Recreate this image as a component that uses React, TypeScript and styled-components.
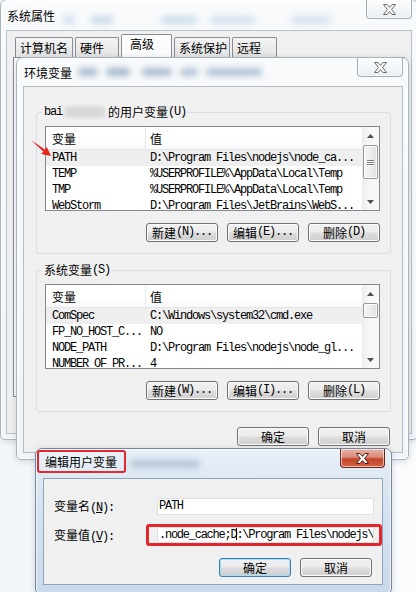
import styled, { createGlobalStyle } from "styled-components";

const CJK = `"Noto Sans CJK SC", "Liberation Sans", sans-serif`;
const MONO = `"Liberation Mono", "Noto Sans CJK SC", monospace`;

const GlobalStyle = createGlobalStyle`
  html, body { margin: 0; padding: 0; }
  body {
    background: #f6f8fa;
    font-family: ${CJK};
    font-size: 12px;
    color: #000;
  }
`;

//desktop + windows
const Desktop = styled.div`
  position: relative;
  width: 416px;
  height: 592px;
  overflow: hidden;
  background: linear-gradient(90deg, #f3f6f8 0%, #fafbfc 100%);
`;

const Window = styled.div<{ $x: number; $y: number; $w: number; $h: number; $pad: string; $active?: boolean }>`
  position: absolute;
  left: ${p => p.$x}px;
  top: ${p => p.$y}px;
  width: ${p => p.$w}px;
  height: ${p => p.$h}px;
  box-sizing: border-box;
  display: flex;
  flex-direction: column;
  padding: ${p => p.$pad};
  border: 1px solid ${p => (p.$active ? "#71869e" : "#a9b3bd")};
  border-radius: 7px 7px 5px 5px;
  background: ${p =>
    p.$active
      ? "linear-gradient(180deg, #e9f0f8 0%, #d6e3f0 35%, #cbdaea 100%)"
      : "linear-gradient(180deg, #f8fafc 0%, #f1f5f8 100%)"};
  box-shadow: inset 0 0 0 1px rgba(255, 255, 255, 0.75), 0 1px 6px rgba(40, 60, 90, 0.18);
`;

const TitleBar = styled.div<{ $h: number }>`
  flex: none;
  height: ${p => p.$h}px;
  display: flex;
  align-items: center;
`;

const Title = styled.span<{ $marked?: boolean }>`
  flex: none;
  font-size: 12px;
  line-height: 15px;
  white-space: nowrap;
  margin-left: 1px;
  text-shadow: 0 0 6px rgba(255, 255, 255, 0.9);
  ${p =>
    p.$marked &&
    `
    align-self: flex-start;
    margin: 1px 0 0 -6px;
    height: 23px;
    box-sizing: border-box;
    padding: 2px 7px 0 6px;
    border: 2px solid #e3262b;
    border-radius: 3px;
  `}
`;

const Haze = styled.span<{ $w: number; $ml: number; $c: string; $dy?: number }>`
  flex: none;
  width: ${p => p.$w}px;
  height: 8px;
  margin-left: ${p => p.$ml}px;
  margin-top: ${p => p.$dy ?? 0}px;
  border-radius: 4px;
  background: ${p => p.$c};
  filter: blur(3px);
`;

const CloseBtn = styled.div<{ $w: number; $h: number; $red?: boolean; $mr?: number }>`
  flex: none;
  align-self: flex-start;
  margin-left: auto;
  margin-right: ${p => p.$mr ?? 0}px;
  width: ${p => p.$w}px;
  height: ${p => p.$h}px;
  box-sizing: border-box;
  display: flex;
  align-items: center;
  justify-content: center;
  border: 1px solid ${p => (p.$red ? "#6e2419" : "#a3acb6")};
  border-top: none;
  border-radius: 0 0 4px 4px;
  background: ${p =>
    p.$red
      ? "linear-gradient(180deg, #e9b2a6 0%, #d98c7b 45%, #c4452c 55%, #cf6243 100%)"
      : "linear-gradient(180deg, #fdfdfe 0%, #f3f6f8 50%, #e9eef2 100%)"};
  box-shadow: inset 0 0 0 1px rgba(255, 255, 255, 0.6);
`;

const Client = styled.div<{ $edge: string }>`
  flex: 1;
  min-height: 0;
  display: flex;
  flex-direction: column;
  background: #f0f0f0;
  border: 1px solid ${p => p.$edge};
  overflow: hidden;
`;

//tabs (系统属性)
const TabStrip = styled.div`
  display: flex;
  align-items: flex-end;
  gap: 2px;
  margin: 3px 0 0 8px;
  height: 23px;
`;

const Tab = styled.div<{ $w: number; $on?: boolean }>`
  width: ${p => p.$w}px;
  height: ${p => (p.$on ? 23 : 20)}px;
  box-sizing: border-box;
  border: 1px solid #898c95;
  border-bottom: none;
  border-radius: 2px 2px 0 0;
  background: ${p => (p.$on ? "#fcfcfc" : "linear-gradient(180deg, #f4f4f4, #e3e3e3)")};
  padding: ${p => (p.$on ? "1px 0 0 8px" : "2px 0 0 4px")};
  font-size: 12px;
  line-height: 16px;
`;

const TabPanel = styled.div`
  flex: 1;
  margin: 0 6px 36px 6px;
  border: 1px solid #898c95;
  background: #fcfcfc;
`;

//env window parts
const EnvBody = styled.div`
  display: flex;
  flex-direction: column;
  padding: 0 11px 0 12px;
`;

const Group = styled.fieldset<{ $mt: number }>`
  margin: ${p => p.$mt}px 0 0 0;
  padding: 7px 10px 11px 8px;
  border: 1px solid #d5dfe5;
  border-radius: 3px;
  min-width: 0;
`;

const Legend = styled.legend`
  margin-left: -3px;
  padding: 0 2px;
  font-size: 12px;
  line-height: 14px;
  display: flex;
  align-items: center;
`;

const Hw = styled.span`
  font-family: ${MONO};
  font-size: 12px;
  letter-spacing: -1.2px;
`;

const Smudge = styled.span`
  display: inline-block;
  width: 40px;
  height: 12px;
  margin: 0 3px 0 3px;
  border-radius: 3px;
  background: #d9d9d9;
  filter: blur(1.5px);
`;

const ListBox = styled.div`
  height: 85px;
  box-sizing: border-box;
  border: 1px solid #828790;
  background: #fff;
  display: flex;
`;

const ListBody = styled.div`
  flex: 1;
  min-width: 0;
  overflow: hidden;
`;

const HeaderRow = styled.div`
  display: grid;
  grid-template-columns: 99px 1fr;
  height: 23px;
  box-sizing: border-box;
  border-bottom: 1px solid #e5e5e5;
  background: linear-gradient(180deg, #ffffff 0%, #ffffff 60%, #f8f9fa 100%);
`;

const HeaderCell = styled.div<{ $divider?: boolean }>`
  display: flex;
  align-items: center;
  padding-left: ${p => (p.$divider ? 4 : 6)}px;
  border-left: ${p => (p.$divider ? "1px solid #e5e5e5" : "none")};
  font-size: 12px;
`;

const Row = styled.div<{ $selected?: boolean }>`
  display: grid;
  grid-template-columns: 99px 1fr;
  height: 16px;
  background: ${p => (p.$selected ? "#efefef" : "transparent")};
`;

const Cell = styled.div<{ $first?: boolean }>`
  padding-left: ${p => (p.$first ? 6 : 5)}px;
  font-family: ${MONO};
  font-size: 12px;
  letter-spacing: -1.2px;
  line-height: 16px;
  white-space: nowrap;
  overflow: hidden;
`;

const ScrollBar = styled.div`
  flex: none;
  width: 17px;
  display: flex;
  flex-direction: column;
  background: linear-gradient(90deg, #ececec 0%, #f6f6f6 40%, #f9f9f9 100%);
`;

const ArrowBox = styled.div`
  flex: none;
  height: 17px;
  display: flex;
  align-items: center;
  justify-content: center;
`;

const Track = styled.div`
  flex: 1;
  padding: 1px 1px 0 1px;
`;

const Thumb = styled.div<{ $h: number }>`
  height: ${p => p.$h}px;
  box-sizing: border-box;
  border: 1px solid #979797;
  border-radius: 2px;
  background: linear-gradient(90deg, #f6f6f6 0%, #ececec 50%, #dfdfdf 100%);
  box-shadow: inset 0 0 0 1px #fbfbfb;
  display: flex;
  flex-direction: column;
  align-items: center;
  justify-content: center;
  gap: 1px;
`;

const GripLine = styled.span`
  width: 7px;
  height: 1px;
  background: #7a7a7a;
  box-shadow: 0 1px 0 #ffffff;
`;

const ButtonRow = styled.div<{ $mt: number; $pr?: number }>`
  display: flex;
  justify-content: flex-end;
  gap: 9px;
  margin-top: ${p => p.$mt}px;
  padding-right: ${p => p.$pr ?? 0}px;
`;

const Button = styled.div<{ $default?: boolean }>`
  width: 72px;
  height: 19px;
  box-sizing: border-box;
  display: flex;
  align-items: center;
  justify-content: center;
  border: 1px solid ${p => (p.$default ? "#3c7fb1" : "#707070")};
  border-radius: 3px;
  background: linear-gradient(180deg, #f2f2f2 0%, #ebebeb 48%, #dddddd 52%, #cfcfcf 100%);
  box-shadow: inset 0 0 0 1px ${p => (p.$default ? "#a6dcf8" : "#fbfbfb")};
  font-size: 12px;
  line-height: 15px;
  white-space: nowrap;
`;

//edit dialog parts
const EditBody = styled.div`
  display: flex;
  flex-direction: column;
  padding: 18px 0 0 10px;
`;

const FieldRow = styled.div<{ $mt?: number }>`
  display: flex;
  align-items: center;
  margin-top: ${p => p.$mt ?? 0}px;
`;

const FieldLabel = styled.div`
  width: 103px;
  flex: none;
  font-size: 12px;
  white-space: nowrap;
  u { text-decoration-thickness: 1px; text-underline-offset: 1px; }
`;

const TextBox = styled.div<{ $h: number }>`
  width: 217px;
  height: ${p => p.$h}px;
  box-sizing: border-box;
  border: 1px solid #dde0e5;
  background: #fff;
  padding-left: 1px;
  font-family: ${MONO};
  font-size: 12px;
  letter-spacing: -1.25px;
  line-height: ${p => p.$h - 2}px;
  white-space: nowrap;
  overflow: hidden;
`;

const Highlight = styled.div`
  margin-left: -11px;
  height: 22px;
  box-sizing: border-box;
  padding: 0 5px 0 8px;
  border: 3px solid #e3262b;
  border-radius: 3px;
  display: flex;
  align-items: center;
`;

const Caret = styled.span`
  display: inline-block;
  width: 1px;
  height: 12px;
  margin-right: -1px;
  vertical-align: -2px;
  background: #000;
`;

const Pointer = styled.svg`
  position: absolute;
  left: 28px;
  top: 136px;
`;

//data
const userVars = [
  ["PATH", "D:\\Program Files\\nodejs\\node_ca..."],
  ["TEMP", "%USERPROFILE%\\AppData\\Local\\Temp"],
  ["TMP", "%USERPROFILE%\\AppData\\Local\\Temp"],
  ["WebStorm", "D:\\Program Files\\JetBrains\\WebS..."],
];

const systemVars = [
  ["ComSpec", "C:\\Windows\\system32\\cmd.exe"],
  ["FP_NO_HOST_C...", "NO"],
  ["NODE_PATH", "D:\\Program Files\\nodejs\\node_gl..."],
  ["NUMBER_OF_PR...", "4"],
];

function CloseGlyph({ light }: { light?: boolean }) {
  return (
    <svg width="13" height="11" viewBox="0 0 13 11">
      <polygon
        points="0.5,0.5 4,0.5 6.5,3.4 9,0.5 12.5,0.5 8.6,5.5 12.5,10.5 9,10.5 6.5,7.6 4,10.5 0.5,10.5 4.4,5.5"
        fill={light ? "#ffffff" : "#fbfbfb"}
        stroke={light ? "#5a1e14" : "#6b6b6b"}
        strokeWidth="1"
        strokeLinejoin="round"
      />
    </svg>
  );
}

function ListView({ rows, thumb, grip }: { rows: string[][]; thumb: number; grip?: boolean }) {
  return (
    <ListBox>
      <ListBody>
        <HeaderRow>
          <HeaderCell>变量</HeaderCell>
          <HeaderCell $divider>值</HeaderCell>
        </HeaderRow>
        {rows.map(([name, value], i) => (
          <Row key={name} $selected={i === 0}>
            <Cell $first>{name}</Cell>
            <Cell>{value}</Cell>
          </Row>
        ))}
      </ListBody>
      <ScrollBar>
        <ArrowBox>
          <svg width="7" height="4">
            <polygon points="3.5,0 7,4 0,4" fill="#505050" />
          </svg>
        </ArrowBox>
        <Track>
          <Thumb $h={thumb}>
            {grip && (
              <>
                <GripLine />
                <GripLine />
                <GripLine />
              </>
            )}
          </Thumb>
        </Track>
        <ArrowBox>
          <svg width="7" height="4">
            <polygon points="0,0 7,0 3.5,4" fill="#505050" />
          </svg>
        </ArrowBox>
      </ScrollBar>
    </ListBox>
  );
}

export default function App() {
  return (
    <Desktop>
      <GlobalStyle />

      <Window $x={0} $y={-1} $w={418} $h={441} $pad="0 5px 5px 5px">
        <TitleBar $h={30}>
          <Title>系统属性</Title>
          <Haze $w={12} $ml={8} $c="#cfdeec" $dy={9} />
          <Haze $w={22} $ml={16} $c="#c9d9ea" $dy={9} />
          <Haze $w={36} $ml={48} $c="#cddcec" $dy={9} />
          <Haze $w={44} $ml={14} $c="#d3e0ee" $dy={9} />
          <Haze $w={40} $ml={36} $c="#d5e2ef" $dy={9} />
          <CloseBtn $w={46} $h={19}>
            <CloseGlyph />
          </CloseBtn>
        </TitleBar>
        <Client $edge="#b8c0c8">
          <TabStrip>
            <Tab $w={58}>计算机名</Tab>
            <Tab $w={44}>硬件</Tab>
            <Tab $w={51} $on>高级</Tab>
            <Tab $w={56}>系统保护</Tab>
            <Tab $w={45}>远程</Tab>
          </TabStrip>
          <TabPanel />
        </Client>
      </Window>

      <Window $x={16} $y={57} $w={393} $h={403} $pad="0 5px 6px 6px">
        <TitleBar $h={28}>
          <Title>环境变量</Title>
          <Haze $w={20} $ml={6} $c="#a9bccf" />
          <Haze $w={24} $ml={8} $c="#a3b7cb" />
          <Haze $w={30} $ml={12} $c="#a9bccf" />
          <Haze $w={18} $ml={8} $c="#b3c4d5" />
          <Haze $w={56} $ml={8} $c="#b0c2d4" />
          <CloseBtn $w={46} $h={19}>
            <CloseGlyph />
          </CloseBtn>
        </TitleBar>
        <Client $edge="#b4bcc5">
          <EnvBody>
            <Group $mt={18}>
              <Legend>
                <Hw>bai</Hw>
                <Smudge />
                的用户变量<Hw>(U)</Hw>
              </Legend>
              <ListView rows={userVars} thumb={34} grip />
              <ButtonRow $mt={12}>
                <Button>新建<Hw>(N)...</Hw></Button>
                <Button>编辑<Hw>(E)...</Hw></Button>
                <Button>删除<Hw>(D)</Hw></Button>
              </ButtonRow>
            </Group>
            <Group $mt={9}>
              <Legend>
                系统变量<Hw>(S)</Hw>
              </Legend>
              <ListView rows={systemVars} thumb={15} />
              <ButtonRow $mt={12}>
                <Button>新建<Hw>(W)...</Hw></Button>
                <Button>编辑<Hw>(I)...</Hw></Button>
                <Button>删除<Hw>(L)</Hw></Button>
              </ButtonRow>
            </Group>
            <ButtonRow $mt={15} $pr={1}>
              <Button>确定</Button>
              <Button>取消</Button>
            </ButtonRow>
          </EnvBody>
        </Client>
      </Window>

      <Window $x={35} $y={448} $w={357} $h={146} $pad="0 8px 8px 7px" $active>
        <TitleBar $h={29}>
          <Title $marked>编辑用户变量</Title>
          <Haze $w={70} $ml={4} $c="#b4c6d8" />
          <CloseBtn $w={45} $h={19} $red $mr={-2}>
            <CloseGlyph light />
          </CloseBtn>
        </TitleBar>
        <Client $edge="#8fa5bd">
          <EditBody>
            <FieldRow>
              <FieldLabel>
                变量名<Hw>(<u>N</u>):</Hw>
              </FieldLabel>
              <TextBox $h={17}>PATH</TextBox>
            </FieldRow>
            <FieldRow $mt={9}>
              <FieldLabel>
                变量值<Hw>(<u>V</u>):</Hw>
              </FieldLabel>
              <Highlight>
                <TextBox $h={16}>
                  .node_cache;D<Caret />:\Program Files\nodejs\
                </TextBox>
              </Highlight>
            </FieldRow>
            <ButtonRow $mt={12} $pr={10}>
              <Button $default>确定</Button>
              <Button>取消</Button>
            </ButtonRow>
          </EditBody>
        </Client>
      </Window>

      <Pointer width="26" height="24" viewBox="0 0 26 24">
        <polygon points="3,4 16.8,13.4 15.2,15.4" fill="#e8221e" />
        <polygon points="23,20 13.2,17.9 18.8,10.9" fill="#e8221e" />
      </Pointer>
    </Desktop>
  );
}
